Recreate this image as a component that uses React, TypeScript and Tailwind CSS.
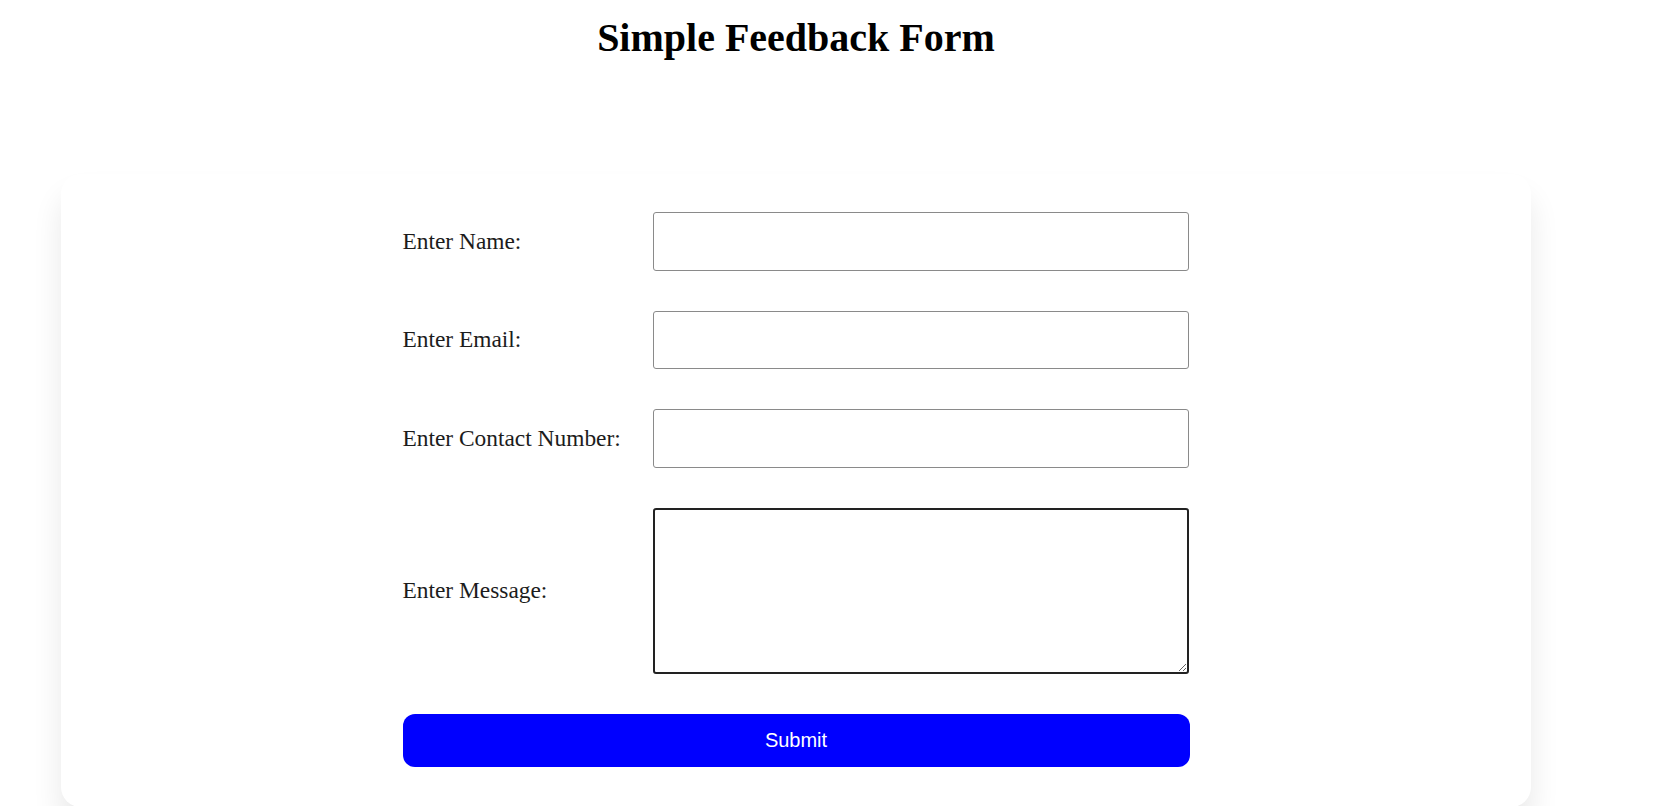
import React from "react";

export default function App() {
  const rows = [
    { label: "Enter Name:", type: "text" },
    { label: "Enter Email:", type: "email" },
    { label: "Enter Contact Number:", type: "tel" },
  ];
  return (
    <div className="min-h-[806px] bg-white overflow-hidden">
      <div className="ml-[61px] w-[1470px]">
        <h1 className="mt-[16px] text-center text-[40px] leading-[44px] font-bold text-black [font-family:'Liberation_Serif','Times_New_Roman',serif]">
          Simple Feedback Form
        </h1>
        <div className="mt-[114px] rounded-[20px] bg-white shadow-[0_22px_30px_rgba(0,0,0,0.09)] pt-[38px] pb-[40px]">
          <form
            className="mx-auto w-[787px] flex flex-col gap-[40px] [font-family:'Liberation_Serif','Times_New_Roman',serif]"
            onSubmit={(e) => e.preventDefault()}
          >
            {rows.map((r) => (
              <div key={r.label} className="flex items-center">
                <label className="w-[250px] shrink-0 text-[23.4px] text-[#1c1c1c]">
                  {r.label}
                </label>
                <input
                  type={r.type}
                  className="w-[536px] h-[58.5px] border border-[#8a8a8a] rounded-[3px] bg-white px-2"
                />
              </div>
            ))}
            <div className="flex items-center">
              <label className="w-[250px] shrink-0 text-[23.4px] text-[#1c1c1c]">
                Enter Message:
              </label>
              <textarea className="w-[536px] h-[166px] border-2 border-[#222222] rounded-[3px] bg-white p-1" />
            </div>
            <button
              type="submit"
              className="h-[53px] w-full rounded-[12px] bg-[#0000ff] text-white text-[20px] [font-family:'Liberation_Sans',Arial,sans-serif]"
            >
              Submit
            </button>
          </form>
        </div>
      </div>
    </div>
  );
}
